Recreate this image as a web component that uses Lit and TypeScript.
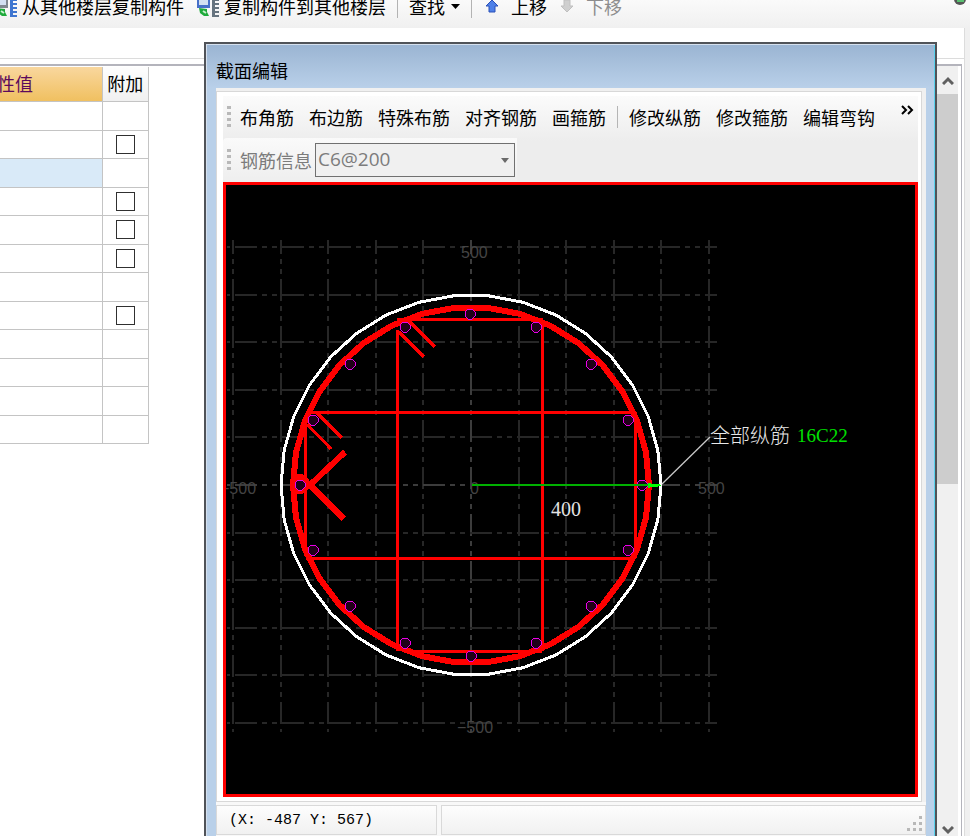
import { LitElement, html, css, svg } from "lit";
import { customElement } from "lit/decorators.js";
import { classMap } from "lit/directives/class-map.js";

const CX = 471;
const CY = 485;

const ring = (r: number, n: number) =>
  Array.from({ length: n }, (_, i) => {
    const a = (i * 2 * Math.PI) / n;
    return `${(CX + r * Math.cos(a)).toFixed(1)},${(CY + r * Math.sin(a)).toFixed(1)}`;
  }).join(" ");

const bars = Array.from({ length: 16 }, (_, i) => {
  const a = (i * Math.PI) / 8;
  return { x: Math.round(CX - 0.5 + 171 * Math.cos(a)), y: Math.round(CY + 171 * Math.sin(a)) };
});

const gridSteps = Array.from({ length: 11 }, (_, i) => Math.round(-238 + i * 47.6));

@customElement("section-canvas")
export class SectionCanvas extends LitElement {
  static styles = css`
    :host { display: block; background: #000; overflow: hidden; }
    .view { display: block; width: 100%; height: 100%; }
    .grid line { stroke: #272727; stroke-width: 2; stroke-dasharray: 22 5 5 5 5 5; }
    .grid .axis { stroke: #3c3c3c; }
    .scale { font: 16px "Liberation Sans", sans-serif; fill: #444; }
    .number { font: 20px "Liberation Serif", serif; fill: #e4e4e4; }
    .number.green { font-size: 19px; fill: #00e000; }
    .cjk { font: 20px "Noto Sans CJK SC", sans-serif; font-weight: 300; fill: #e8e8e8; }
    .outline { fill: none; stroke: #fff; stroke-width: 3; }
    .hoop { fill: none; stroke: #f00; stroke-width: 6; }
    .tie { fill: none; stroke: #f00; stroke-width: 3; }
    .bar { fill: #200018; stroke: #e800e8; stroke-width: 1; }
  `;

  render() {
    return html`<svg class="view" role="img" aria-label="截面">
      <g transform="translate(-226 -185)">
        <g class="grid" shape-rendering="crispEdges">
          ${gridSteps.map(
            (s, i) => svg`
            <line class=${classMap({ axis: i === 5 })} x1="227" x2="717" y1=${CY + s} y2=${CY + s} stroke-dashoffset="39"></line>
            <line class=${classMap({ axis: i === 5 })} y1="240" y2="732" x1=${CX + s} x2=${CX + s} stroke-dashoffset="8"></line>`
          )}
        </g>
        <text class="scale" x="461" y="258">500</text>
        <text class="scale" x="457" y="733">−500</text>
        <text class="scale" x="220" y="494">−500</text>
        <text class="scale" x="698" y="494">500</text>
        <text class="scale" x="470" y="494">0</text>
        <g shape-rendering="crispEdges">
          <polygon class="outline" points=${ring(190, 34)}></polygon>
          <polygon class="hoop" points=${ring(178, 34)}></polygon>
          <path class="tie" d="M397.5 330V651M542.5 320V651M397 319.5H543M404 651.5H542M305.5 412.500H635M305.500 558H635M305.500 420V556M635.500 412V558"></path>
          <path class="tie" d="M399 332l25 25M409 321l26 26M307 424l24 25M317 413l25 25"></path>
          <path class="hoop" d="M310 485L345 452M310 485L344 519"></path>
          <circle class="hoop" cx="300" cy="484" r="7"></circle>
          ${bars.map((b) => svg`<polygon class="bar" points="${b.x - 2},${b.y - 5} ${b.x + 2},${b.y - 5} ${b.x + 5},${b.y - 2} ${b.x + 5},${b.y + 2} ${b.x + 2},${b.y + 5} ${b.x - 2},${b.y + 5} ${b.x - 5},${b.y + 2} ${b.x - 5},${b.y - 2}"></polygon>`)}
          <path d="M472 485H648" stroke="#00b000" stroke-width="2"></path>
          <path d="M648 482.500L651 483.500H657L662 485L657 487H651L648 488Z" fill="#0f0"></path>
        </g>
        <path d="M662 484L710 437" stroke="#c8c8c8" stroke-width="1.300"></path>
        <text class="number" x="551" y="516">400</text>
        <text class="cjk" x="710" y="443">全部纵筋</text>
        <text class="number green" x="797" y="442">16C22</text>
      </g>
    </svg>`;
  }
}

@customElement("section-dialog")
export class SectionDialog extends LitElement {
  static styles = css`
    :host {
      display: flex; flex-direction: column; box-sizing: border-box;
      border: 2px solid #505358; border-bottom: 0;
      background: linear-gradient(#9ab4d2, #b9d0e9 44px);
      box-shadow: inset 1px 1px #d5e0ee, inset -1px 0 #59d3ee;
      padding: 0 9px 0 10px; color: #000;
      font: 18px "Noto Sans CJK SC", sans-serif;
    }
    .title { font: inherit; margin: 0; height: 44px; line-height: 52px; box-sizing: border-box; }
    .frame { flex: 1; display: flex; flex-direction: column; min-height: 0; background: #f0f0f0; padding: 3px 4px 0 0; }
    .body {
      flex: 1; display: flex; flex-direction: column; min-height: 0;
      border: 1px solid #d8d8d8; background: #fff; padding: 4px 3px 4px 6px;
    }
    .tools { background: linear-gradient(#fbfbfb, #ededed 45px); }
    .row { display: flex; align-items: center; height: 42px; box-sizing: border-box; border-radius: 4px 0 0 4px; }
    .row.info { background: linear-gradient(#fafafa, #eee); width: 294px; height: 44px; }
    .grip { flex: none; width: 4px; height: 22px; margin: 0 9px 0 4px;
      background: repeating-linear-gradient(#b9b9b9 0 3px, transparent 3px 6px); }
    .items { flex: 1; display: flex; align-items: center; gap: 15px; min-width: 0; overflow: hidden; }
    .tool { flex: none; font: inherit; line-height: 26px; color: inherit; padding: 0; border: 0; background: none; }
    .sep { flex: none; width: 1px; height: 22px; background: #b5b5b5; margin: 0 -4px; }
    .more { align-self: flex-start; padding: 9px 4px 0 0; border: 0; background: none; line-height: 0; }
    .label { flex: none; white-space: nowrap; color: #7c7c7c; line-height: 26px; }
    .combo { flex: none; position: relative; display: flex; margin-left: 3px; }
    .choice {
      appearance: none; box-sizing: border-box; width: 200px; height: 34px; padding: 0 2px 3px;
      border: 1px solid #707070; border-radius: 0; background: #f0f0f0; color: #7c7c7c; opacity: 1;
      font: 19px "Open Sans", sans-serif;
    }
    .chevron { position: absolute; right: 5px; top: 15px; pointer-events: none; }
    section-canvas { flex: 1; min-height: 0; border: 3px solid #f00; }
    .status { display: flex; gap: 4px; background: #f8f8f8; padding: 3px 0 1px; }
    .cell {
      box-sizing: border-box; height: 30px; line-height: 30px; padding-left: 12px;
      border: 1px solid #d9d9d9; background: linear-gradient(#fdfdfd, #f1f1f1);
      font-family: "Liberation Mono", monospace; font-size: 15px;
    }
    .coords { width: 221px; white-space: pre; }
    .rest { flex: 1; display: flex; justify-content: flex-end; align-items: flex-end; padding: 0 2px 2px 0; }
  `;

  render() {
    const tool = (t: string) => html`<button class="tool">${t}</button>`;
    return html`
      <h1 class="title">截面编辑</h1>
      <div class="frame">
        <div class="body">
          <div class="tools">
            <div class="row">
              <span class="grip"></span>
              <div class="items">
                ${["布角筋", "布边筋", "特殊布筋", "对齐钢筋", "画箍筋"].map(tool)}
                <span class="sep"></span>
                ${["修改纵筋", "修改箍筋", "编辑弯钩"].map(tool)}
              </div>
              <button class="more" aria-label="更多">
                <svg width="13" height="10"><path d="M1 1l4 4-4 4M7 1l4 4-4 4" fill="none" stroke="#000" stroke-width="2"></path></svg>
              </button>
            </div>
            <div class="row info">
              <span class="grip"></span>
              <label class="label" for="rebar">钢筋信息</label>
              <span class="combo">
                <select class="choice" id="rebar" disabled><option>C6@200</option></select>
                <svg class="chevron" width="10" height="6"><path d="M1 0h8L5 5z" fill="#6a6a6a"></path></svg>
              </span>
            </div>
          </div>
          <section-canvas></section-canvas>
        </div>
      </div>
      <div class="status">
        <div class="cell coords">(X: -487 Y: 567)</div>
        <div class="cell rest">
          <svg width="16" height="16" fill="#b8b8b8"><path d="M12 0h3v3h-3zM6 6h3v3H6zM12 6h3v3h-3zM0 12h3v3H0zM6 12h3v3H6zM12 12h3v3h-3z"></path></svg>
        </div>
      </div>`;
  }
}

type Row = { check?: boolean; selected?: boolean };
const rows: Row[] = [
  {}, { check: true }, { selected: true }, { check: true }, { check: true }, { check: true },
  {}, { check: true }, {}, {}, {}, {},
];

@customElement("app-root")
export class AppRoot extends LitElement {
  static styles = css`
    :host {
      display: flex; flex-direction: column; position: relative; height: 100vh; overflow: hidden;
      background: #fff; color: #000; font: 18px "Noto Sans CJK SC", sans-serif;
    }
    .toolbar { flex: none; height: 28px; overflow: hidden; background: linear-gradient(#fafafa, #f0f0f0); display: flex; justify-content: space-between; }
    .strip { display: flex; align-items: center; height: 40px; margin-top: -14px; }
    .cmd { display: flex; align-items: center; font: inherit; line-height: 26px; color: inherit; padding: 0; border: 0; background: none; margin-right: 11px; white-space: nowrap; }
    .cmd:disabled { color: #8d8d8d; }
    .cmd svg { flex: none; }
    .copy svg { margin-right: 4px; }
    .copy.first { margin-left: -7px; }
    .find svg { margin-left: 6px; }
    .move svg { margin: 0 12px 0 2px; }
    .sep { width: 1px; height: 24px; background: #b3b3b3; margin-right: 11px; }
    .knob { flex: none; margin-right: 3px; }
    .main { flex: 1; display: flex; flex-direction: column; min-height: 0; margin-right: 5px; border-right: 1px solid #dcdcdc; box-shadow: 5px 0 #f0f0f0; }
    .blank { flex: none; height: 30px; border-bottom: 1px solid #dcdcdc; margin-bottom: 5px; }
    .panel { flex: 1; display: flex; justify-content: space-between; min-height: 0; margin-right: 2px; border: solid #b4b4bc; border-width: 2px 1px 0 0; }
    .props { flex: none; align-self: flex-start; width: 149px; margin-top: 1px; border-collapse: collapse; table-layout: fixed; }
    .props th, .props td { box-sizing: border-box; padding: 0; border: solid #c4c4c4; border-width: 0 1px 1px 0; line-height: 0; text-align: center; }
    .props th { height: 34px; font-weight: 400; line-height: 33px; background: linear-gradient(#fdfdfd, #f0f0f0); }
    .props .value { width: 102px; color: #5c0a5c; background: linear-gradient(#f9d79e, #f0c060); text-align: left; text-indent: -3px; }
    .props td { height: 28px; }
    .props tbody tr:nth-child(odd) td { height: 29px; }
    .props .selected { background: #d9eaf8; }
    .tick { appearance: none; box-sizing: border-box; width: 19px; height: 19px; margin: 0; border: 1px solid #303030; background: #fff; vertical-align: middle; }
    .scroll { flex: none; width: 21px; margin-right: 3px; background: #f0f0f0; display: flex; flex-direction: column; align-items: center; }
    .scroll svg { margin: 10px 0 9px; }
    .thumb { width: 100%; height: 390px; background: #cdcdcd; }
    .space { flex: 1; }
    .scroll .down { margin: 0 0 1px; }
    section-dialog { position: absolute; left: 204px; right: 33px; top: 42px; bottom: 0; }
  `;

  copyIcon(source: string, target: string) {
    return html`<svg width="25" height="24" viewBox="0 0 25 24">
      <path d="M2 1h13v13H2z" fill=${source}></path><path d="M4 3h9v8H4z" fill="#d3e0f2"></path>
      <path d="M4 14l8 1v3l2 4H9l-4-3z" fill="#1faa3c"></path><path d="M8 17l3 2" stroke="#c8f0cc" stroke-width="2"></path>
      <path d="M17 0h3v23h-3z" fill=${target}></path><path d="M20 2h4M20 6h4M20 10h4M20 14h4M20 18h4M20 22h4" stroke=${target} stroke-width="2"></path>
    </svg>`;
  }

  render() {
    return html`
      <header class="toolbar">
        <div class="strip">
          <button class="cmd copy first">${this.copyIcon("#808890", "#3f76d0")}从其他楼层复制构件</button>
          <button class="cmd copy">${this.copyIcon("#4670c8", "#66747f")}复制构件到其他楼层</button>
          <span class="sep"></span>
          <button class="cmd find">查找<svg width="9" height="5"><path d="M0 0h9L4.500 5z"></path></svg></button>
          <span class="sep"></span>
          <button class="cmd move">
            <svg width="14" height="15"><path d="M7 1l6 6h-3v6H4V7H1z" fill="#4e80e8" stroke="#2b50b8"></path></svg>上移
          </button>
          <button class="cmd move" disabled>
            <svg width="14" height="15"><path d="M7 13L1 7h3V1h6v6h3z" fill="#cfcfcf" stroke="#c0c0c0"></path></svg>下移
          </button>
        </div>
        <svg class="knob" width="13" height="6"><circle cx="6" cy="-1" r="6" fill="#555"></circle><path d="M3 1h7" stroke="#58c070" stroke-width="2"></path></svg>
      </header>
      <div class="main">
        <div class="blank"></div>
        <div class="panel">
          <table class="props">
            <thead><tr><th class="value">性值</th><th>附加</th></tr></thead>
            <tbody>
              ${rows.map(
                (r) => html`<tr>
                  <td class=${classMap({ selected: !!r.selected })}></td>
                  <td>${r.check ? html`<input class="tick" type="checkbox" aria-label="附加">` : ""}</td>
                </tr>`
              )}
            </tbody>
          </table>
          <div class="scroll">
            <svg width="12" height="9"><path d="M1 8l5-5 5 5" fill="none" stroke="#606060" stroke-width="3"></path></svg>
            <div class="thumb"></div>
            <div class="space"></div>
            <svg class="down" width="12" height="9"><path d="M1 1l5 5 5-5" fill="none" stroke="#606060" stroke-width="3"></path></svg>
          </div>
        </div>
      </div>
      <section-dialog></section-dialog>`;
  }
}
